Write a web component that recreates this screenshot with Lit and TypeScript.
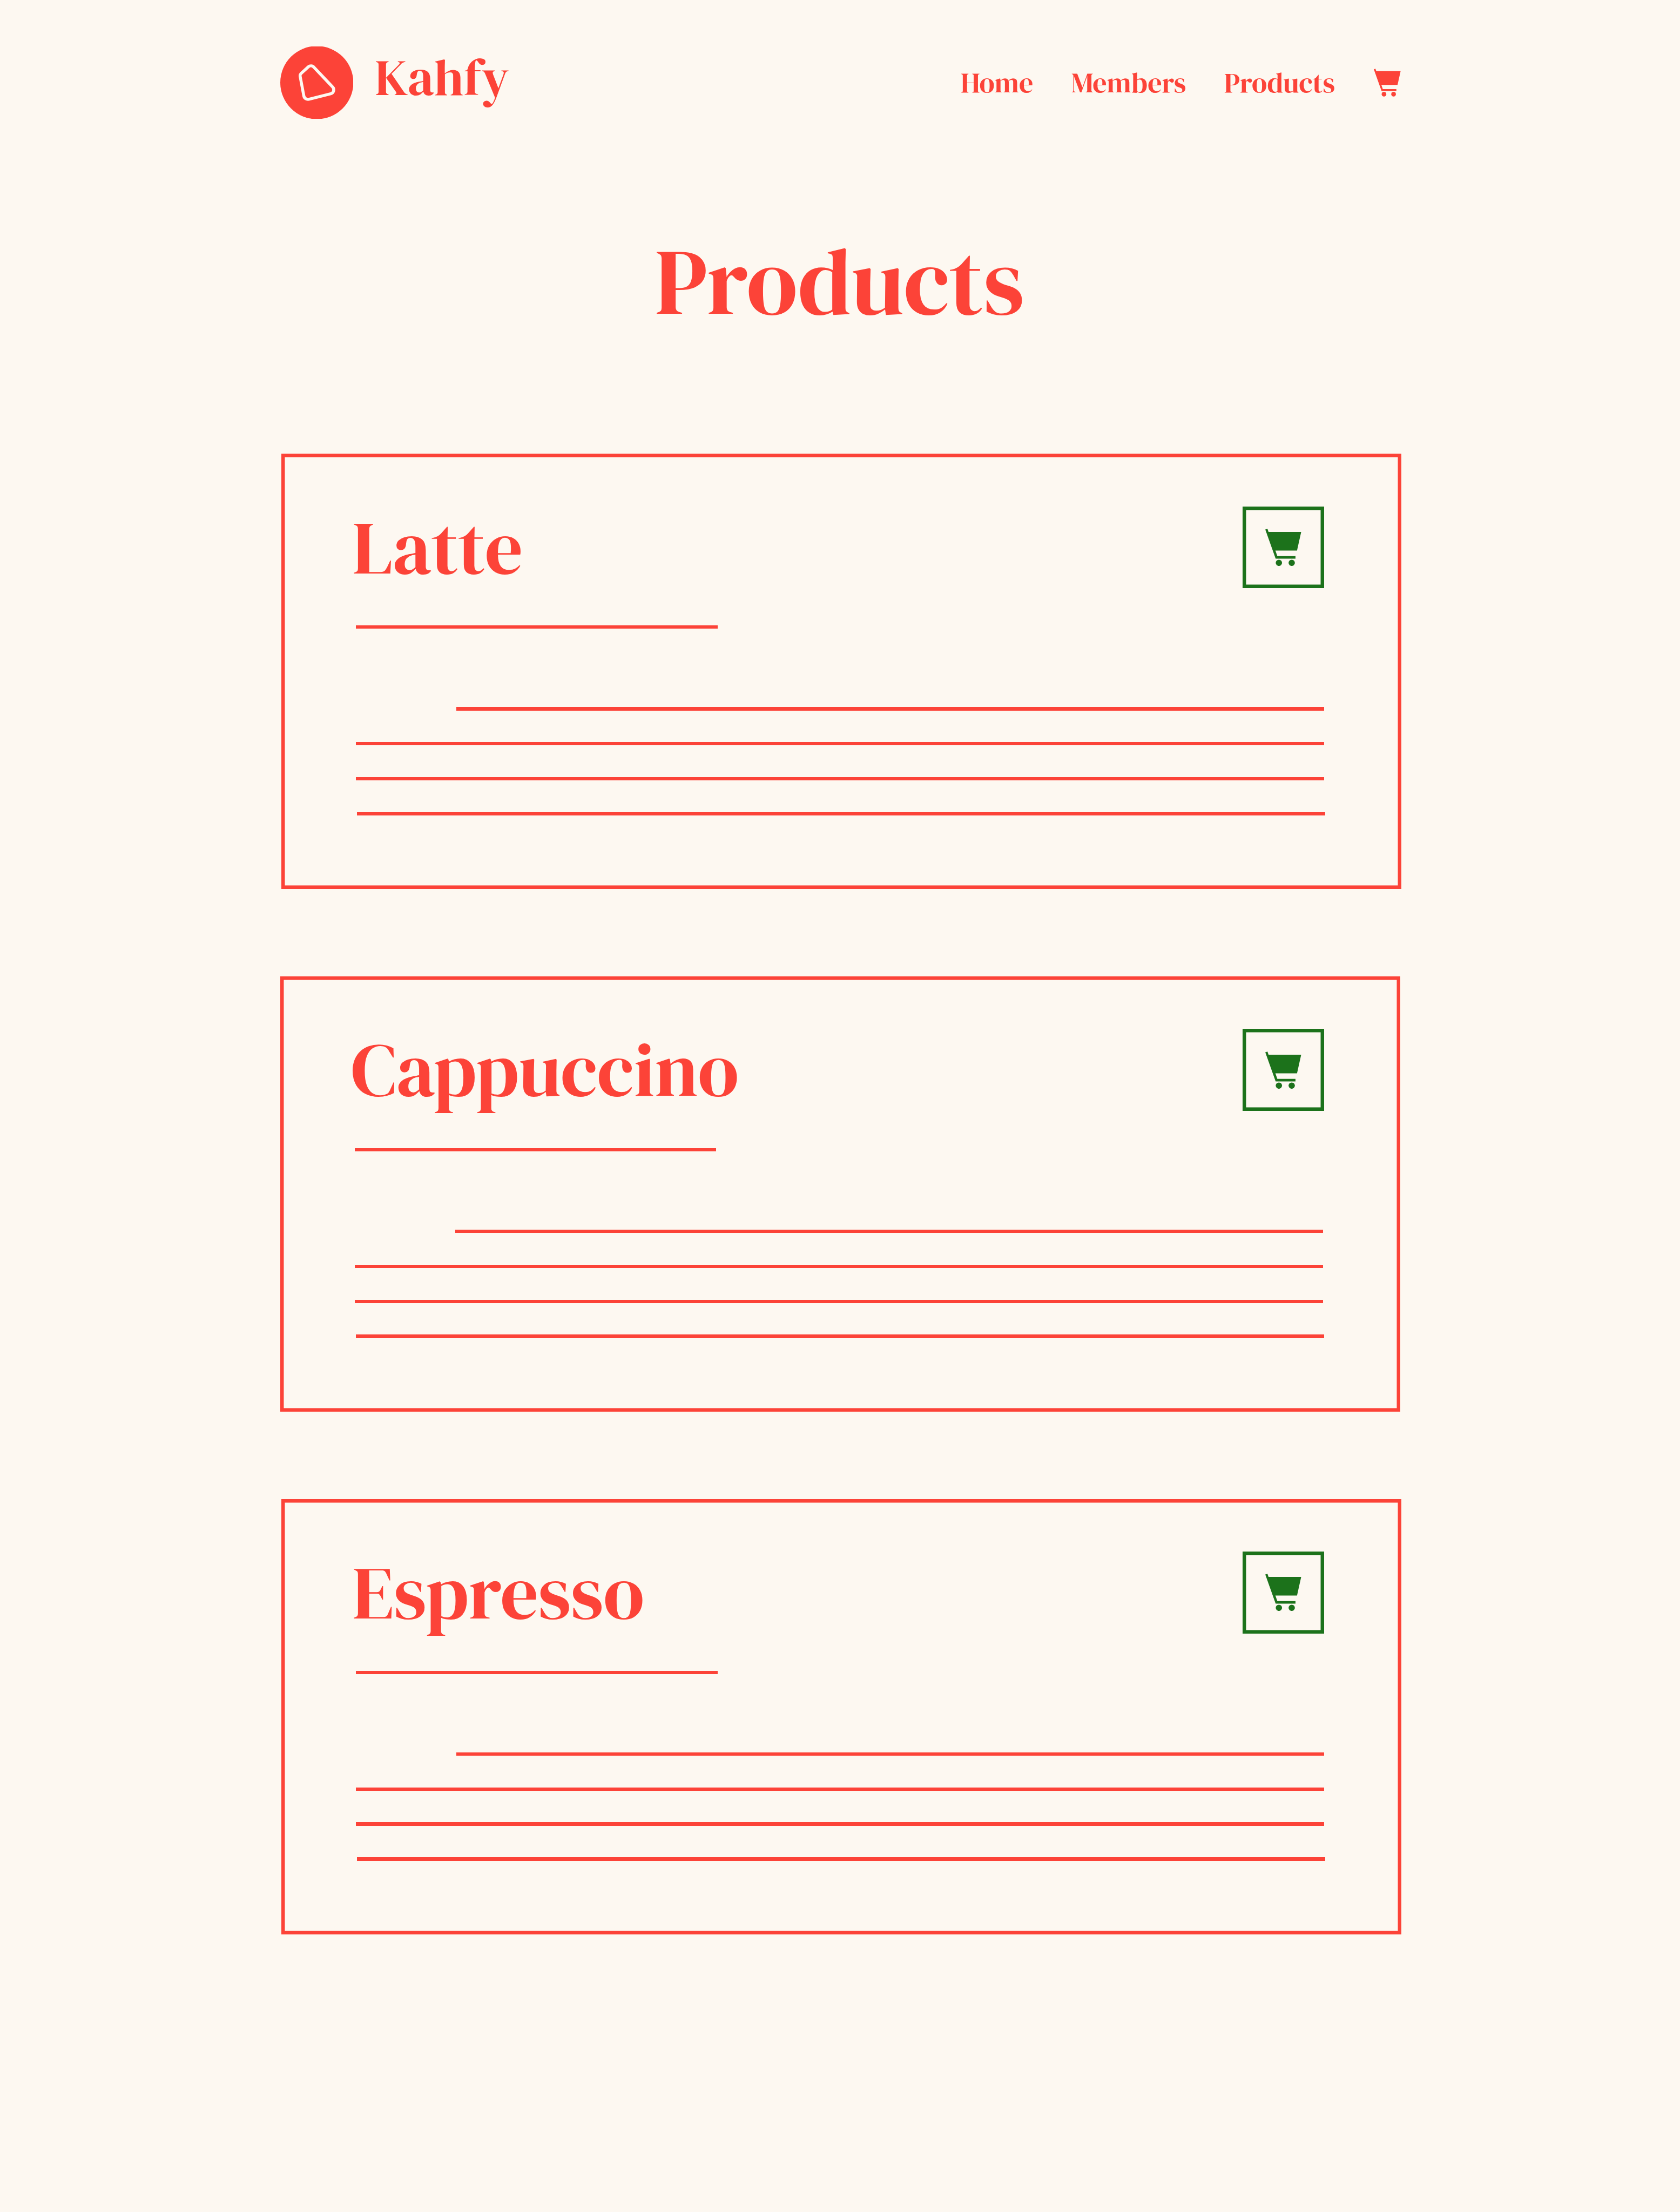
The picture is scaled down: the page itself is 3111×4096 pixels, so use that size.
import { LitElement, html, css } from "lit";
import { customElement, property } from "lit/decorators.js";
import { classMap } from "lit/directives/class-map.js";

interface Product {
  name: string;
  inset?: boolean;
}

const PRODUCTS: Product[] = [
  { name: "Latte" },
  { name: "Cappuccino", inset: true },
  { name: "Espresso" },
];

const LINKS = ["Home", "Members", "Products"];

@customElement("cart-icon")
export class CartIcon extends LitElement {
  static styles = css`
    :host {
      display: block;
    }
    .icon {
      display: block;
      width: 100%;
      height: 100%;
      fill: currentColor;
    }
  `;

  render() {
    return html`
      <svg class="icon" viewBox="0 0 277 288" aria-hidden="true">
        <path
          d="M0 6 L17 1 L25 24.5 H277 L245 168.5 H78 L93 211.5 H233 V231 H80 Z"
        />
        <circle cx="105" cy="263.5" r="24.3" />
        <circle cx="204" cy="263.5" r="24.3" />
      </svg>
    `;
  }
}

@customElement("product-card")
export class ProductCard extends LitElement {
  @property() name = "";

  static styles = css`
    :host {
      display: block;
      box-sizing: border-box;
      width: calc(960 * var(--u));
      height: calc(373 * var(--u));
      padding: calc(45 * var(--u)) calc(66 * var(--u)) 0 calc(64 * var(--u));
      box-shadow: inset 0 0 0 calc(3 * var(--u)) var(--red);
    }
    .head {
      display: flex;
      justify-content: space-between;
      height: calc(70 * var(--u));
    }
    .name {
      margin: 0 0 0 calc(-3 * var(--u));
      font-size: calc(64 * var(--u));
      line-height: calc(70 * var(--u));
      font-weight: 400;
      white-space: nowrap;
    }
    .add {
      display: flex;
      align-items: center;
      justify-content: center;
      box-sizing: border-box;
      width: calc(70 * var(--u));
      height: calc(70 * var(--u));
      margin: 0 var(--add-shift, 0px) 0 0;
      padding: 0;
      border: 0;
      background: none;
      color: var(--green);
      box-shadow: inset 0 0 0 calc(3 * var(--u)) var(--green);
    }
    .cart {
      width: calc(30.8 * var(--u));
      height: calc(32 * var(--u));
    }
    .line {
      height: calc(3 * var(--u));
      background: var(--red);
    }
    .rule {
      width: calc(310 * var(--u));
      margin-top: calc(32 * var(--u));
    }
    .text {
      display: flex;
      flex-direction: column;
      gap: calc(27 * var(--u));
      margin-top: calc(67 * var(--u));
    }
    .first {
      margin-left: calc(86 * var(--u));
    }
    .last {
      margin-left: var(--u);
      margin-right: calc(-1 * var(--u));
    }
  `;

  render() {
    return html`
      <div class="head">
        <h2 class="name">${this.name}</h2>
        <button class="add" aria-label="Add to cart">
          <cart-icon class="cart"></cart-icon>
        </button>
      </div>
      <div class="line rule"></div>
      <div class="text">
        <div class="line first"></div>
        <div class="line"></div>
        <div class="line"></div>
        <div class="line last"></div>
      </div>
    `;
  }
}

@customElement("app-root")
export class AppRoot extends LitElement {
  static styles = css`
    :host {
      --u: calc(100vw / 1440);
      --red: #fc4338;
      --green: #1c721b;
      --paper: #fdf8f1;
      display: block;
      box-sizing: border-box;
      height: 100vh;
      overflow: hidden;
      padding: 0 calc(239 * var(--u)) 0 calc(240 * var(--u));
      background: var(--paper);
      color: var(--red);
      font-family: "DM Serif Display", "Liberation Serif", serif;
    }
    .bar {
      display: flex;
      align-items: center;
      justify-content: space-between;
      height: calc(142 * var(--u));
    }
    .brand {
      display: flex;
      align-items: center;
      gap: calc(18.6 * var(--u));
    }
    .logo {
      display: block;
      width: calc(62.67 * var(--u));
      height: calc(62 * var(--u));
    }
    .disc {
      fill: var(--red);
    }
    .bean {
      fill: none;
      stroke: var(--paper);
      stroke-width: 23;
    }
    .wordmark {
      padding-bottom: calc(9.2 * var(--u));
      font-size: calc(43.7 * var(--u));
      line-height: 1.1;
    }
    .nav {
      display: flex;
      align-items: center;
      gap: calc(32.6 * var(--u));
      margin-right: calc(0.4 * var(--u));
      font-size: calc(24 * var(--u));
      line-height: 1.2;
    }
    .bag {
      width: calc(23 * var(--u));
      height: calc(24 * var(--u));
      margin-left: calc(0.7 * var(--u));
    }
    .title {
      margin: calc(19.3 * var(--u)) 0 calc(67.7 * var(--u));
      padding-right: calc(2 * var(--u));
      font-size: calc(80 * var(--u));
      line-height: calc(160 * var(--u));
      font-weight: 400;
      text-align: center;
    }
    .list {
      display: flex;
      flex-direction: column;
      gap: calc(75 * var(--u));
    }
    .card {
      margin-left: var(--u);
    }
    .card.inset {
      --add-shift: calc(-1 * var(--u));
      margin-left: 0;
    }
  `;

  render() {
    return html`
      <header class="bar">
        <div class="brand">
          <svg class="logo" viewBox="16 15 564 558" aria-hidden="true">
            <circle class="disc" cx="298" cy="294" r="282" />
            <path
              class="bean"
              d="M180 220 L233 172 C245 162 264 162 276 176 L421 329 C436 346 428 374 405 380 L240 422 C220 427 202 416 198 398 L169 244 C167 235 171 228 180 220Z"
            />
          </svg>
          <span class="wordmark">Kahfy</span>
        </div>
        <nav class="nav">
          ${LINKS.map((label) => html`<span>${label}</span>`)}
          <cart-icon class="bag"></cart-icon>
        </nav>
      </header>
      <main>
        <h1 class="title">Products</h1>
        <section class="list">
          ${PRODUCTS.map(
            (p) => html`<product-card
              class=${classMap({ card: true, inset: !!p.inset })}
              .name=${p.name}
            ></product-card>`
          )}
        </section>
      </main>
    `;
  }
}
